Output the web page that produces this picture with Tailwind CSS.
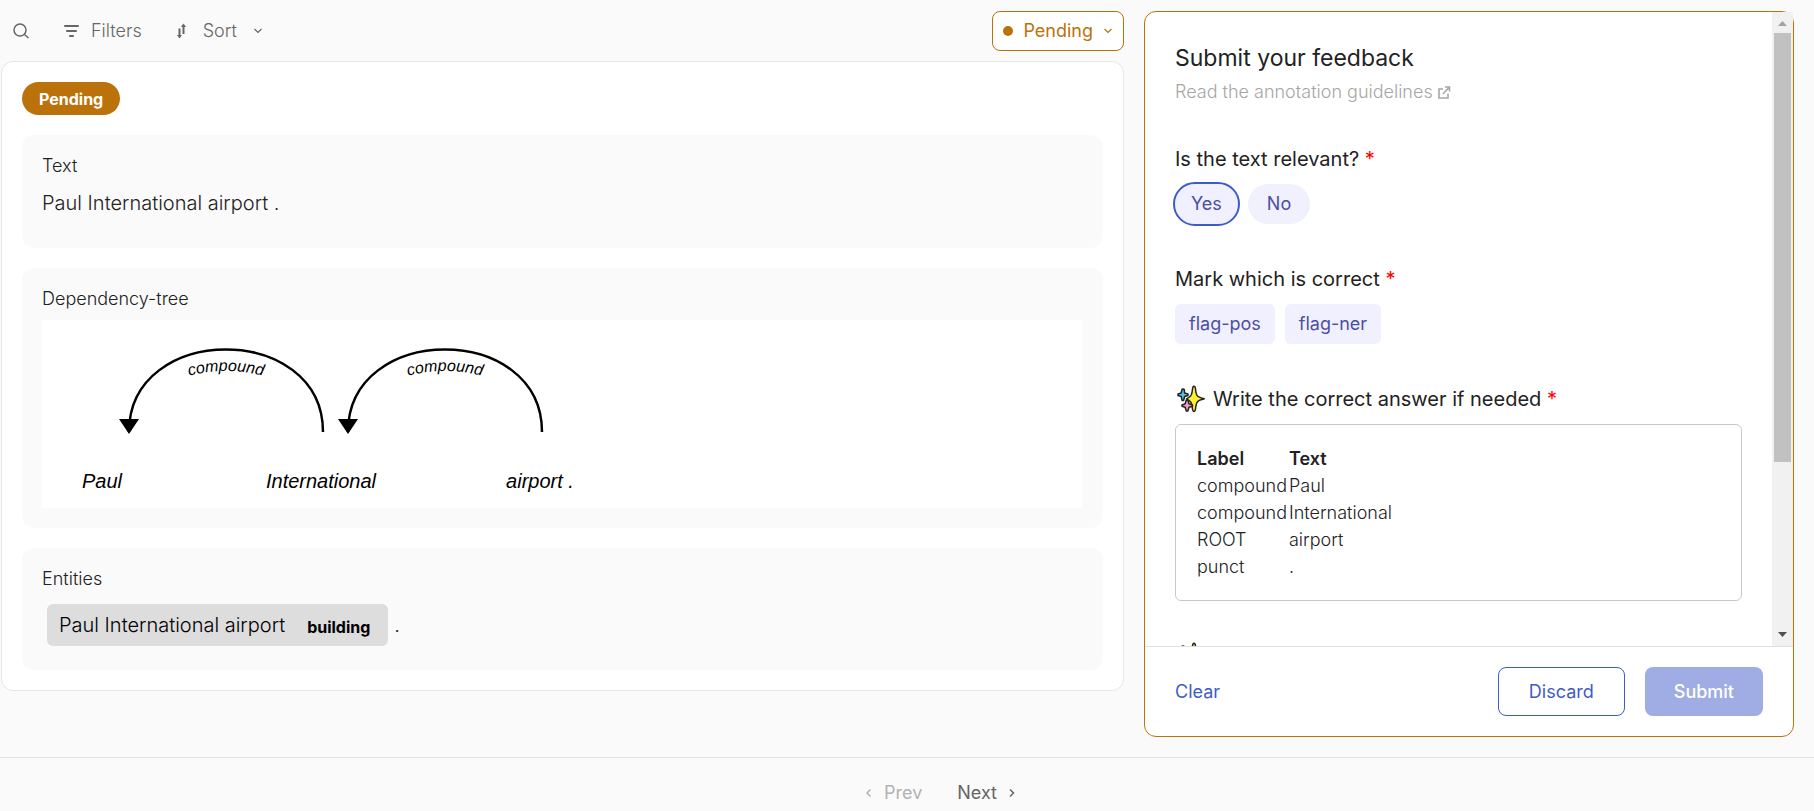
<!DOCTYPE html>
<html lang="en">
<head>
<meta charset="utf-8">
<meta name="viewport" content="width=device-width, initial-scale=1">
<title>Annotation</title>
<script src="https://cdn.jsdelivr.net/npm/@tailwindcss/browser@4"></script>
</head>
<body class="flex h-screen flex-col overflow-hidden bg-[#fafafa] font-['Inter',sans-serif] text-lg text-[#222]">
<svg class="hidden" aria-hidden="true">
  <symbol id="sparkles" viewBox="0 0 28 28">
    <g stroke="#23231f" stroke-width="1.500" stroke-linejoin="round">
      <path fill="#fff033" d="M17 1.200 Q18.200 1.200 18.500 4 Q19 9.500 20.500 11 Q22 12.500 27.300 13.800 Q22 15.200 20.500 16.700 Q19 18.500 18.500 24 Q18.200 26.500 17 26.500 Q15.800 26.500 15.500 24 Q15 18.500 13.500 16.700 Q12 15.200 9.500 13.800 Q12 12.500 13.500 11 Q15 9.500 15.500 4 Q15.800 1.200 17 1.200Z"/>
      <path fill="#4cc4ec" d="M5.800 4 L7.300 4.500 L7.600 8 L11 9 V10.500 L7.600 11.500 L6.600 15.500 H5.200 L4.200 11.500 L1 10.500 V9 L4.200 8 L5 4.500Z"/>
      <path fill="#f59cc8" d="M9.300 15 H10.800 L12 18.800 L15.500 20 V21.300 L12 22.300 L10.800 26 H9.300 L8.200 22.300 L5 21.300 V20 L8.200 18.800Z"/>
    </g>
  </symbol>
</svg>

<main class="flex min-h-0 flex-1 gap-5 pt-[11px] pr-5 pb-5 pl-px">
  <section class="flex min-w-0 flex-1 flex-col gap-2.5">
    <div class="flex h-10 items-center text-[#666]">
      <button type="button" aria-label="Search" class="mr-8 ml-[11px]">
        <svg class="size-5" viewBox="0 0 20 20" fill="none" stroke="currentColor" stroke-width="1.500"><circle cx="8" cy="9" r="6"/><path d="M12.500 13.500 16.500 17"/></svg>
      </button>
      <button type="button" class="mr-[34px] flex items-center gap-3">
        <svg class="h-5 w-[15px]" viewBox="0 0 15 20" fill="none" stroke="currentColor" stroke-width="2" stroke-linecap="round"><path d="M1 5h13M3 10h9M6 15h3"/></svg>
        <span class="font-light">Filters</span>
      </button>
      <button type="button" class="flex items-center">
        <svg class="mr-4 h-5 w-[11px]" viewBox="0 0 11 20" fill="currentColor"><path d="M2.500 7.500h2v6.500h1.500l-2.500 3.500L1 14h1.500zM6.500 13V6H5l2.500-3.500L10 6H8.500v7z"/></svg>
        <span class="font-light">Sort</span>
        <svg class="ml-4 size-2.5" viewBox="0 0 10 10" fill="none" stroke="currentColor" stroke-width="1.200"><path d="m1.500 3 3.500 3.500L8.500 3"/></svg>
      </button>
      <button type="button" class="ml-auto flex h-10 items-center rounded-lg border border-[#bb720a] bg-white px-2.5 text-[#bb720a]">
        <span class="size-2.5 rounded-full bg-[#bb720a]"></span>
        <span class="ml-2.5">Pending</span>
        <svg class="ml-2.5 size-2.5" viewBox="0 0 10 10" fill="none" stroke="currentColor" stroke-width="1.200"><path d="m1.500 3 3.500 3.500L8.500 3"/></svg>
      </button>
    </div>

    <article class="flex flex-col gap-5 rounded-xl border border-[#e6e6e6] bg-white p-5">
      <span class="flex h-[33px] items-center self-start rounded-full bg-[#bb720a] px-[17px] text-base font-bold text-white">Pending</span>

      <section class="h-[113px] rounded-xl bg-[#fafafa] p-5">
        <h3 class="leading-[22px] font-light">Text</h3>
        <p class="mt-1.5 text-xl leading-10 font-light">Paul International airport .</p>
      </section>

      <section class="rounded-xl bg-[#fafafa] p-5">
        <h3 class="mb-2.5 leading-[22px] font-light">Dependency-tree</h3>
        <div class="bg-white">
          <svg class="block h-[188px] w-[600px] max-w-full font-['Liberation_Sans',sans-serif] italic" viewBox="0 0 600 188" role="img" aria-label="Dependency tree">
            <defs>
              <path id="label-1" d="M139 58Q184 44 229 58"/>
              <path id="label-2" d="M358 58Q403 44 448 58"/>
            </defs>
            <g fill="none" stroke="#000" stroke-width="2.500">
              <path d="M87 112C87 2 281 2 281 112"/>
              <path d="M306 112C306 2 500 2 500 112"/>
            </g>
            <path d="M77 99h20l-10 15zM296 99h20l-10 15z"/>
            <g font-size="16" text-anchor="middle">
              <text><textPath href="#label-1" startOffset="50%">compound</textPath></text>
              <text><textPath href="#label-2" startOffset="50%">compound</textPath></text>
            </g>
            <g font-size="20" text-anchor="middle">
              <text x="60" y="168">Paul</text>
              <text x="279" y="168">International</text>
              <text x="498" y="168">airport .</text>
            </g>
          </svg>
        </div>
      </section>

      <section class="h-[122px] rounded-xl bg-[#fafafa] p-5">
        <h3 class="leading-[22px] font-light">Entities</h3>
        <p class="mt-3.5 flex items-center pl-[5px] text-xl font-light">
          <mark class="flex h-[42px] items-center rounded-md bg-[#ddd] px-3 text-black">Paul International airport <strong class="mr-1.5 ml-[22px] pt-1 text-base leading-6 font-bold">building</strong></mark>
          <span class="ml-1.5">.</span>
        </p>
      </section>
    </article>
  </section>

  <form class="flex w-[650px] shrink-0 flex-col rounded-xl border border-[#bb720a] bg-white">
    <div class="flex min-h-0 flex-1">
      <div class="flex min-w-0 flex-1 flex-col gap-10 overflow-hidden px-[30px] pt-[31px]">
        <header class="h-[61px]">
          <h2 class="text-[23px] leading-[30px]">Submit your feedback</h2>
          <a href="#" class="mt-1 flex items-center gap-1 leading-[30px] font-light text-[#a6a6a6]">Read the annotation guidelines
            <svg class="size-3.5" viewBox="0 0 14 14" fill="none" stroke="currentColor" stroke-width="1.600"><path d="M6 4H2v9h9V8.500M6 9l6-6.500M8 2h4.500v4.500"/></svg>
          </a>
        </header>

        <fieldset>
          <legend class="mb-2.5 text-xl leading-[30px]">Is the text relevant? <span class="text-[#f00]">*</span></legend>
          <div class="flex gap-2.5 text-[#4c4ea3]">
            <label class="relative flex h-10 items-center rounded-full bg-[#f0f0fe] px-4 outline-2 outline-[#3e5cc9]"><input type="radio" name="relevant" class="sr-only" checked>Yes</label>
            <label class="relative flex h-10 items-center rounded-full bg-[#f0f0fe] px-[19px]"><input type="radio" name="relevant" class="sr-only">No</label>
          </div>
        </fieldset>

        <fieldset>
          <legend class="mb-2.5 text-xl leading-[30px]">Mark which is correct <span class="text-[#f00]">*</span></legend>
          <div class="flex gap-2.5 text-[#4c4ea3]">
            <label class="relative flex h-10 items-center rounded-md bg-[#f0f0fe] px-3.5"><input type="checkbox" name="flag" class="sr-only">flag-pos</label>
            <label class="relative flex h-10 items-center rounded-md bg-[#f0f0fe] px-3.5"><input type="checkbox" name="flag" class="sr-only">flag-ner</label>
          </div>
        </fieldset>

        <div>
          <h4 class="mb-2.5 flex h-[30px] items-center text-xl" id="answer"><svg class="mr-2 ml-0.5 size-7" aria-hidden="true"><use href="#sparkles"/></svg>Write the correct answer if needed&nbsp;<span class="text-[#f00]">*</span></h4>
          <div class="rounded-md border border-[#c9c9c9] px-[21px] py-5" role="group" aria-labelledby="answer">
            <table class="text-left leading-[27px] font-light">
              <thead><tr><th class="pr-0.5 font-semibold">Label</th><th class="font-semibold">Text</th></tr></thead>
              <tbody>
                <tr><td class="pr-0.5">compound</td><td>Paul</td></tr>
                <tr><td class="pr-0.5">compound</td><td>International</td></tr>
                <tr><td class="pr-0.5">ROOT</td><td>airport</td></tr>
                <tr><td class="pr-0.5">punct</td><td>.</td></tr>
              </tbody>
            </table>
          </div>
        </div>

        <div class="flex h-[30px] shrink-0 items-center"><svg class="ml-0.5 size-7" aria-hidden="true"><use href="#sparkles"/></svg></div>
      </div>

      <div class="flex w-[21px] flex-col items-center bg-[#f1f1f1]" aria-hidden="true">
        <svg class="h-[21px] w-[21px] shrink-0" viewBox="0 0 21 21" fill="#a3a3a3"><path d="M6 14 10.500 9 15 14z"/></svg>
        <div class="h-[429px] w-[17px] bg-[#c1c1c1]"></div>
        <svg class="mt-auto h-[21px] w-[21px] shrink-0" viewBox="0 0 21 21" fill="#505050"><path d="M6 7h9l-4.500 5z"/></svg>
      </div>
    </div>

    <div class="flex items-center gap-5 border-t border-[#e0e0e0] px-[30px] py-5 text-[#3e5cc9]">
      <button type="button" class="mr-auto">Clear</button>
      <button type="button" class="h-[49px] rounded-lg border border-[#3e5cc9] px-[30px]">Discard</button>
      <button type="submit" disabled class="h-[49px] rounded-lg bg-[#9fade4] px-[29px] font-medium text-white">Submit</button>
    </div>
  </form>
</main>

<nav class="flex h-[54px] shrink-0 items-start justify-center gap-[35px] border-t border-[#e0e0e0] pt-[21px] pl-[67px] text-[#666]">
  <button type="button" disabled class="flex items-center gap-2.5 text-[#b2b2b2]">
    <svg class="size-2.5" viewBox="0 0 10 10" fill="none" stroke="currentColor" stroke-width="1.500"><path d="M6.500 1.500 3 5l3.500 3.500"/></svg>Prev
  </button>
  <button type="button" class="flex items-center gap-2.5">Next
    <svg class="size-2.5" viewBox="0 0 10 10" fill="none" stroke="currentColor" stroke-width="1.500"><path d="M3 1.500 6.500 5 3 8.500"/></svg>
  </button>
</nav>
</body>
</html>
